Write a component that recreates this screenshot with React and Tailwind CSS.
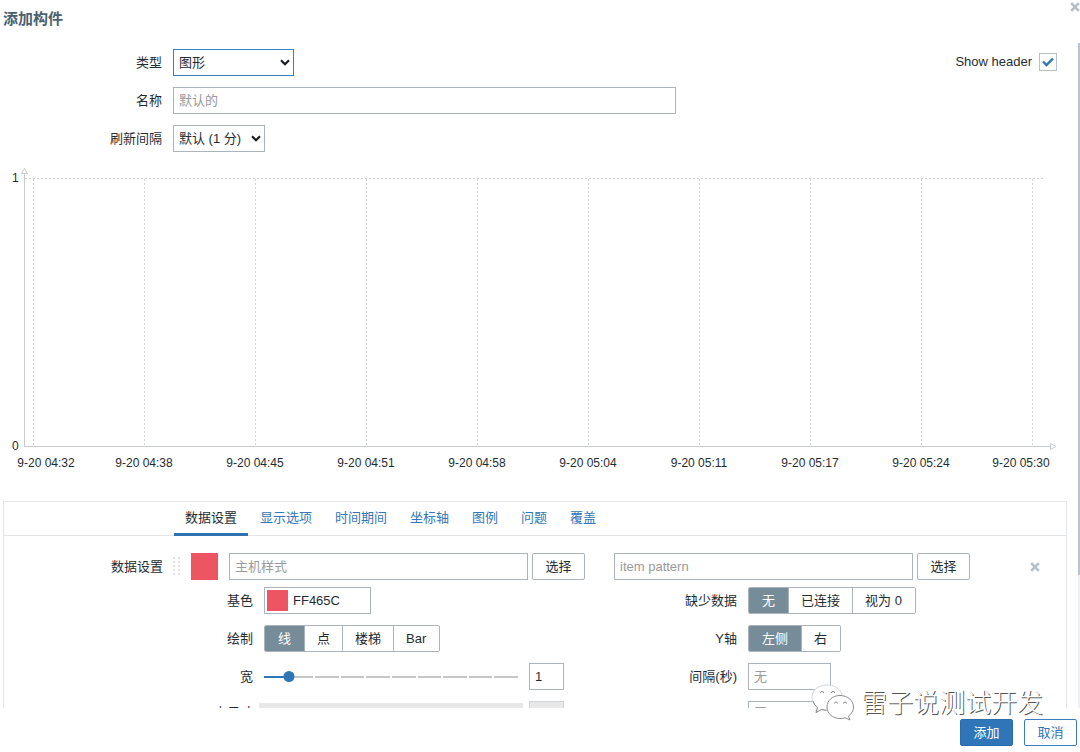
import React, { useState } from "react";

const TICKS = [
  { x: 33, labelX: 46, label: "9-20 04:32" },
  { x: 144, labelX: 144, label: "9-20 04:38" },
  { x: 255, labelX: 255, label: "9-20 04:45" },
  { x: 366, labelX: 366, label: "9-20 04:51" },
  { x: 477, labelX: 477, label: "9-20 04:58" },
  { x: 588, labelX: 588, label: "9-20 05:04" },
  { x: 699, labelX: 699, label: "9-20 05:11" },
  { x: 810, labelX: 810, label: "9-20 05:17" },
  { x: 921, labelX: 921, label: "9-20 05:24" },
  { x: 1032, labelX: 1021, label: "9-20 05:30" },
];

const TABS = ["数据设置", "显示选项", "时间期间", "坐标轴", "图例", "问题", "覆盖"];

const inputClass =
  "h-[27px] border border-[#acb4bb] bg-white px-[5px] outline-none placeholder:text-[#9a9a9a]";

const App = () => {
  return (
    <div className="flex h-screen flex-col bg-white font-['Liberation_Sans','Noto_Sans_CJK_SC',sans-serif] text-[13px] leading-4 text-[#1f2c33]">
      <header className="flex h-[43px] shrink-0 items-start justify-between pl-[3px]">
        <h1 className="pt-[7px] text-[15px] leading-6 font-bold text-[#4a6270]">添加构件</h1>
        <button type="button" aria-label="关闭" className="pt-0.5">
          <CloseIcon />
        </button>
      </header>
      <main className="flex min-h-0 flex-1 overflow-hidden">
        <div className="min-w-0 flex-1 pt-1.5">
          <WidgetForm />
          <Chart />
          <DataPanel />
        </div>
        <div className="w-0.5 shrink-0 bg-[#eef1f3]">
          <div className="h-4/5 bg-[#b9c5cd]" />
        </div>
      </main>
      <footer className="flex h-11 shrink-0 items-start justify-end gap-[11px] pt-[11px] pr-[3px]">
        <button type="button" className="h-[27px] w-[53px] rounded-xs border border-[#2a6cac] bg-[#2f76b9] text-white">
          添加
        </button>
        <button type="button" className="h-[27px] w-[53px] rounded-xs border border-[#3c7fc0] bg-white text-[#2f76b9]">
          取消
        </button>
      </footer>
      <Watermark />
    </div>
  );
};

export default App;

const WidgetForm = () => {
  return (
    <div className="flex items-start justify-between pr-[21px]">
      <div className="grid min-w-0 flex-1 grid-cols-[162px_minmax(0,503px)] items-center gap-[11px]">
        <label htmlFor="type" className="text-right">类型</label>
        <Select id="type" value="图形" className="w-[121px] border-[#3c7fc0]" />
        <label htmlFor="name" className="text-right">名称</label>
        <input id="name" type="text" placeholder="默认的" className={`${inputClass} w-full`} />
        <label htmlFor="refresh" className="text-right">刷新间隔</label>
        <Select id="refresh" value="默认 (1 分)" className="w-[92px] border-[#acb4bb]" />
      </div>
      <label className="flex h-[26px] items-center gap-[7px]">
        Show header
        <span className="relative flex size-[18px]">
          <input type="checkbox" defaultChecked className="size-[18px] appearance-none border border-[#b8c0c6] bg-white" />
          <svg viewBox="0 0 18 18" className="pointer-events-none absolute inset-0 size-[18px]">
            <path d="M4 8.500l3.500 3.500L14 5.500" fill="none" stroke="#2f76b9" strokeWidth="2.4" />
          </svg>
        </span>
      </label>
    </div>
  );
};

const Select = ({ id, value, className }) => {
  return (
    <div className="relative flex w-fit">
      <select id={id} className={`h-[27px] appearance-none border bg-white pl-[5px] outline-none ${className}`}>
        <option>{value}</option>
      </select>
      <svg viewBox="0 0 10 7" className="pointer-events-none absolute top-2.5 right-1 h-[7px] w-2.5">
        <path d="M1 1.2l4 4 4-4" fill="none" stroke="#151b1f" strokeWidth="2.1" />
      </svg>
    </div>
  );
};

const Chart = () => {
  return (
    <svg viewBox="0 0 1078 341" className="mt-2 block w-full text-xs" fill="#1f2c33">
      <g stroke="#d0d3d5" strokeDasharray="2 2">
        <line x1="25" y1="18.5" x2="1044" y2="18.5" />
        {TICKS.map((tick) => (
          <line key={tick.x} x1={tick.x + 0.5} y1="19" x2={tick.x + 0.5} y2="287" />
        ))}
      </g>
      <g stroke="#c9cdd0" fill="#fff">
        <path d="M24.5 14v272.5H1051" fill="none" />
        <path d="M21.500 13.500h6l-3-5z" />
        <path d="M1050.500 283.500v6l5.500-3z" />
      </g>
      <text x="12" y="22">1</text>
      <text x="12" y="290">0</text>
      {TICKS.map((tick) => (
        <text key={tick.label} x={tick.labelX} y="307" textAnchor="middle">{tick.label}</text>
      ))}
    </svg>
  );
};

const DataPanel = () => {
  const [active, setActive] = useState(TABS[0]);

  return (
    <section className="mr-[11px] ml-[3px] border border-[#e3e6e8]">
      <nav className="flex h-[34px] gap-px border-b border-[#e3e6e8] pl-[170px]">
        {TABS.map((tab) => (
          <button
            key={tab}
            type="button"
            onClick={() => setActive(tab)}
            className={
              tab === active
                ? "h-[34px] border-b-3 border-[#2f73b3] px-[11px]"
                : "h-[34px] border-b-3 border-transparent px-[11px] text-[#3277b9]"
            }
          >
            {tab}
          </button>
        ))}
      </nav>
      <div className="flex items-center pt-[17px] pr-[26px]">
        <label htmlFor="host" className="w-[159px] text-right">数据设置</label>
        <DragHandle />
        <button type="button" aria-label="颜色" className="mr-[11px] size-[27px] shrink-0 bg-[#ee5562]" />
        <div className="mr-[29px] flex min-w-0 flex-1 gap-1">
          <input id="host" type="text" placeholder="主机样式" className={`${inputClass} min-w-0 flex-1`} />
          <PickButton />
        </div>
        <div className="mr-[60px] flex min-w-0 flex-1 gap-1">
          <input type="text" aria-label="item pattern" placeholder="item pattern" className={`${inputClass} min-w-0 flex-1`} />
          <PickButton />
        </div>
        <button type="button" aria-label="移除">
          <CloseIcon />
        </button>
      </div>
      <div className="mt-[7px] grid grid-cols-[249px_minmax(0,300px)_162px_minmax(0,1fr)] items-center gap-[11px]">
        <label htmlFor="color" className="text-right">基色</label>
        <div className="flex h-[27px] w-[107px] items-center border border-[#acb4bb] pl-0.5">
          <span className="size-[21px] shrink-0 bg-[#ee5562]" />
          <input id="color" type="text" defaultValue="FF465C" className="w-full min-w-0 px-[5px] outline-none" />
        </div>
        <span className="text-right">缺少数据</span>
        <Segmented label="缺少数据" options={["无", "已连接", "视为 0"]} />

        <span className="text-right">绘制</span>
        <Segmented label="绘制" options={["线", "点", "楼梯", "Bar"]} />
        <span className="text-right">Y轴</span>
        <Segmented label="Y轴" options={["左侧", "右"]} />

        <label htmlFor="width" className="text-right">宽</label>
        <div className="flex items-center justify-between">
          <WidthSlider />
          <input id="width" type="text" defaultValue="1" className={`${inputClass} w-[35px]`} />
        </div>
        <label htmlFor="gap" className="text-right">间隔(秒)</label>
        <input id="gap" type="text" placeholder="无" className={`${inputClass} w-[83px]`} />

        <label htmlFor="size" className="self-start pt-1 text-right">点尺寸</label>
        <div className="-ml-[5px] flex items-center justify-between">
          <div className="h-[23px] w-[264px] bg-[#e8e8e8]" />
          <input id="size" type="text" disabled className="h-[27px] w-[35px] border border-[#cfd4d8] bg-[#e8e8e8]" />
        </div>
        <span />
        <input type="text" aria-label="时间" placeholder="无" className={`${inputClass} w-[83px] pb-1`} />
      </div>
    </section>
  );
};

const PickButton = () => {
  return (
    <button type="button" className="h-[27px] w-[53px] shrink-0 rounded-xs border border-[#acb4bb] bg-white">
      选择
    </button>
  );
};

const DragHandle = () => {
  return (
    <svg viewBox="0 0 8 20" className="mx-2.5 h-5 w-2 shrink-0" fill="#dde3e7">
      {[0, 4, 8, 12, 16].map((y) => (
        <g key={y}>
          <rect x="0" y={y} width="2" height="2" />
          <rect x="5" y={y} width="2" height="2" />
        </g>
      ))}
    </svg>
  );
};

const Segmented = ({ label, options }) => {
  const [selected, setSelected] = useState(options[0]);

  return (
    <div role="group" aria-label={label} className="flex h-[27px] w-fit divide-x divide-[#acb4bb] overflow-hidden rounded-xs border border-[#acb4bb]">
      {options.map((option) => (
        <button
          key={option}
          type="button"
          onClick={() => setSelected(option)}
          className={
            option === selected
              ? "bg-[#768d99] px-3 text-white first:px-[13px]"
              : "bg-white px-3 last:pr-[13px]"
          }
        >
          {option}
        </button>
      ))}
    </div>
  );
};

const WidthSlider = () => {
  const [value, setValue] = useState(1);

  return (
    <div className="relative flex h-4 w-[254px] items-center">
      <div className="flex h-0.5 w-full gap-0.5">
        {Array.from({ length: 10 }, (_, i) => (
          <span key={i} className={i < value ? "flex-1 bg-[#2f76b9]" : "flex-1 bg-[#c4c6c8]"} />
        ))}
      </div>
      <span
        className="absolute size-[11px] -translate-x-1/2 rounded-full bg-[#2f76b9]"
        style={{ left: `${value * 10}%` }}
      />
      <input
        type="range"
        min="0"
        max="10"
        value={value}
        aria-label="宽"
        onChange={(e) => setValue(Number(e.target.value))}
        className="absolute inset-0 w-full opacity-0"
      />
    </div>
  );
};

const CloseIcon = () => {
  return (
    <svg viewBox="0 0 10 10" className="size-2.5">
      <path d="M1.200 1.200l7.600 7.600M8.800 1.200l-7.600 7.600" stroke="#b3bfc7" strokeWidth="2.6" />
    </svg>
  );
};

const Watermark = () => {
  return (
    <div className="pointer-events-none absolute right-[37px] bottom-[30px] flex items-center gap-[7px]">
      <svg viewBox="0 0 44 38" className="h-[38px] w-11" fill="#fff" stroke="#8b8b8b" strokeWidth="1">
        <path d="M17 1C8 1 2 6.500 2 13.500c0 4 2 7.500 5.500 10L6 28.500l5.500-3c2 .6 4 .8 6 .8 8.500 0 15-5.500 15-12.500S26 1 17 1z" stroke="#d8d8d8" />
        <path d="M3 17c1 3 2.500 5 4.500 6.500L6 28.500l5.500-3 5 .8" fill="none" />
        <path d="M30 11.500c-7.500 0-13 5-13 11.500s5.500 11.500 13 11.500c1.800 0 3.500-.3 5-.8l5 2.300-1.500-4c3-2 5-5.300 5-9 0-6.500-6-11.500-13.500-11.500z" />
        <path
          d="M10.500 9a1.600 1.600 0 0 1 3.200 0M21.500 9a1.600 1.600 0 0 1 3.200 0M24.500 19.500a1.500 1.500 0 0 1 3 0M33.500 19.500a1.500 1.500 0 0 1 3 0"
          fill="none"
        />
      </svg>
      <span className="text-[26px] leading-8 font-light text-white [text-shadow:1px_1px_0_#555]">雷子说测试开发</span>
    </div>
  );
};
